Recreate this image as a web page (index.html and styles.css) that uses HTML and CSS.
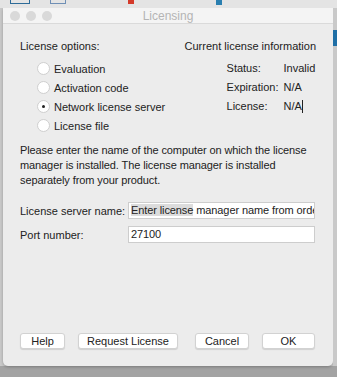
FILE: index.html
```html
<!DOCTYPE html>
<html lang="en">
<head>
	<meta charset="UTF-8">
	<title>Licensing</title>
	<link rel="stylesheet" href="styles.css">
</head>
<body>
	<div class="toolbar">
		<span class="tb tb1"></span>
		<span class="tb tb2"></span>
		<span class="tb tb3"></span>
		<span class="tb tb4"></span>
	</div>
	<div class="desk">
		<div class="win">
			<div class="titlebar">
				<div class="lights">
					<span></span><span></span><span></span>
				</div>
				<div class="title">Licensing</div>
			</div>
			<div class="content">
				<div class="top">
					<div class="opts">
						<div class="head">License options:</div>
						<ul class="radios">
							<li><span class="radio"></span>Evaluation</li>
							<li><span class="radio"></span>Activation code</li>
							<li><span class="radio on"></span>Network license server</li>
							<li><span class="radio"></span>License file</li>
						</ul>
					</div>
					<div class="info">
						<div class="head">Current license information</div>
						<div class="grid">
							<span>Status:</span><span>Invalid</span>
							<span>Expiration:</span><span>N/A</span>
							<span>License:</span><span>N/A<i class="caret"></i></span>
						</div>
					</div>
				</div>
				<p class="msg">Please enter the name of the computer on which the license<br>manager is installed. The license manager is installed<br>separately from your product.</p>
				<div class="field">
					<label>License server name:</label>
					<div class="input"><span class="sel">Enter license</span> manager name from orde</div>
				</div>
				<div class="field">
					<label>Port number:</label>
					<div class="input">27100</div>
				</div>
				<div class="buttons">
					<button class="b-help">Help</button>
					<button class="b-req">Request License</button>
					<button class="b-cancel">Cancel</button>
					<button class="b-ok">OK</button>
				</div>
			</div>
		</div>
		<div class="side">
			<span class="blue"></span>
		</div>
	</div>
</body>
</html>
```

FILE: styles.css
```css
*{
	margin: 0;
	padding: 0;
	box-sizing: border-box;
}
body{
	width: 337px;
	height: 377px;
	overflow: hidden;
	background-color: #a3a3a3;
	font-family: "Liberation Sans", Arial, sans-serif;
	font-size: 11px;
	color: #222;
}
.toolbar{
	height: 8px;
	background-color: #e4e4e4;
	position: relative;
}
.tb{
	position: absolute;
	top: 0;
	height: 4px;
}
.tb1{ left: 10px; width: 20px; border: 1px solid #2d6b98; border-top: none; }
.tb2{ left: 50px; width: 16px; border: 1px solid #6f8fb5; border-top: none; }
.tb3{ left: 128px; width: 6px; height: 4px; background-color: #d43a2a; }
.tb4{ left: 216px; width: 6px; height: 5px; background-color: #2a7fb0; }
.desk{
	display: flex;
	height: 358px;
	background-color: #c9c9c9;
}
.win{
	margin-left: 3px;
	width: 330px;
	height: 358px;
	background-color: #ececec;
	border-radius: 0 0 5px 5px;
	box-shadow: 0 1px 3px rgba(0,0,0,.25);
}
.side{
	flex: 1;
	background-color: #c9c9c9;
	position: relative;
}
.side .blue{
	position: absolute;
	top: 22px;
	left: 0;
	width: 4px;
	height: 16px;
	background-color: #1f6fa6;
}
.titlebar{
	height: 16px;
	background-color: #f4f4f4;
	border-bottom: 1px solid #dadada;
	position: relative;
}
.lights{
	display: flex;
	gap: 6px;
	padding: 3px 0 0 7px;
}
.lights span{
	width: 10px;
	height: 10px;
	border-radius: 50%;
	background-color: #d9d9d9;
}
.title{
	position: absolute;
	top: 1px;
	left: 0;
	width: 100%;
	text-align: center;
	color: #b4b4b4;
	font-size: 12px;
}
.content{
	padding: 15px 17px 0 17px;
}
.top{
	display: flex;
	justify-content: space-between;
}
.head{
	line-height: 14px;
}
.radios{
	list-style: none;
	margin-top: 6px;
	padding-left: 17px;
}
.radios li{
	display: flex;
	align-items: center;
	height: 19px;
}
.radio{
	width: 13px;
	height: 13px;
	border-radius: 50%;
	background-color: #fff;
	border: 1px solid #cfcfcf;
	margin-right: 4px;
	position: relative;
}
.radio.on::after{
	content: "";
	position: absolute;
	top: 4px;
	left: 4px;
	width: 3px;
	height: 3px;
	border-radius: 50%;
	background-color: #222;
}
.grid{
	display: grid;
	grid-template-columns: 57px auto;
	margin: 6px 0 0 42px;
}
.grid span{
	line-height: 19px;
}
.caret{
	display: inline-block;
	width: 1px;
	height: 13px;
	background-color: #222;
	vertical-align: -3px;
}
.msg{
	margin-top: 8px;
	line-height: 15px;
	letter-spacing: -0.1px;
	white-space: nowrap;
}
.field{
	display: flex;
	align-items: center;
	margin-top: 7px;
}
.msg + .field{
	margin-top: 14px;
}
.field label{
	width: 108px;
}
.input{
	width: 187px;
	height: 17px;
	background-color: #fff;
	border: 1px solid #cdcdcd;
	padding-left: 2px;
	line-height: 15px;
	white-space: nowrap;
	overflow: hidden;
	letter-spacing: -0.1px;
}
.sel{
	background-color: #dcdcdc;
}
.buttons{
	display: flex;
	margin-top: 90px;
}
.buttons button{
	height: 16px;
	background-color: #fff;
	border: 1px solid #d2d2d2;
	border-radius: 3px;
	box-shadow: 0 1px 1px rgba(0,0,0,.12);
	font-family: inherit;
	font-size: 11px;
	color: #222;
}
.b-help{ width: 45px; }
.b-req{ width: 100px; margin-left: 13px; }
.b-cancel{ width: 54px; margin-left: 17px; }
.b-ok{ width: 53px; margin-left: 13px; }
```
